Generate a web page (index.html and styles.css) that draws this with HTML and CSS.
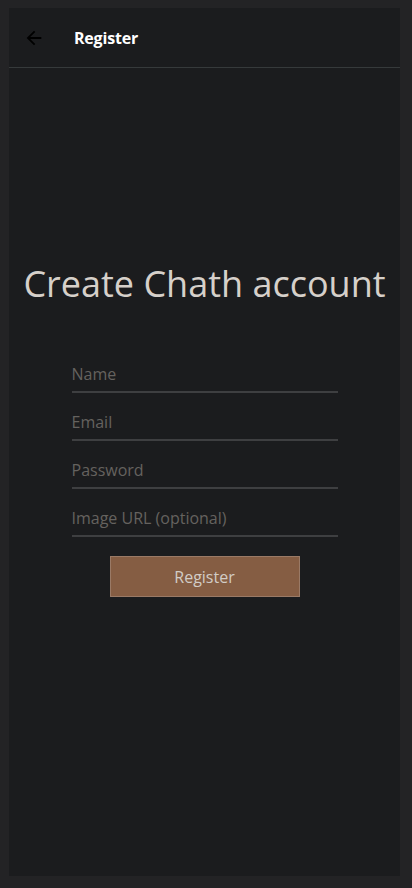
FILE: index.html
```html
<!DOCTYPE html>
<html lang="en">
<head>
<meta charset="utf-8">
<title>Register</title>
<link rel="stylesheet" href="styles.css">
</head>
<body>
<div class="panel">
  <header class="topbar">
    <button class="back" aria-label="Back">
      <svg width="22" height="22" viewBox="0 0 24 24"><path d="M20 11H7.83l5.59-5.59L12 4l-8 8 8 8 1.41-1.41L7.83 13H20v-2z" fill="#000"/></svg>
    </button>
    <h1 class="title">Register</h1>
  </header>
  <main class="content">
    <h2 class="heading">Create Chath account</h2>
    <form class="form">
      <input class="field" type="text" placeholder="Name">
      <input class="field" type="email" placeholder="Email">
      <input class="field" type="password" placeholder="Password">
      <input class="field" type="text" placeholder="Image URL (optional)">
      <button class="submit" type="button">Register</button>
    </form>
  </main>
</div>
</body>
</html>
```
FILE: styles.css
```css
html, body {
  margin: 0;
  padding: 0;
  background: #232325;
  height: 100%;
}
body {
  padding: 8px 12px 12px 9px;
  box-sizing: border-box;
  font-family: "Open Sans", "Noto Sans", sans-serif;
}
.panel {
  width: 391px;
  height: 868px;
  background: #1b1c1e;
  display: flex;
  flex-direction: column;
}
.topbar {
  height: 59px;
  border-bottom: 1px solid #363a3b;
  display: flex;
  align-items: center;
  padding-left: 14px;
  gap: 29px;
  flex-shrink: 0;
}
.back {
  background: none;
  border: none;
  padding: 0;
  width: 22px;
  height: 22px;
  display: flex;
  cursor: pointer;
}
.title {
  margin: 0;
  font-size: 16px;
  font-weight: 700;
  color: #ffffff;
  padding-top: 1px;
  letter-spacing: -0.2px;
}
.content {
  display: flex;
  flex-direction: column;
  align-items: center;
  padding-top: 192px;
}
.heading {
  margin: 0;
  font-weight: 400;
  font-size: 36px;
  color: #d6d0ca;
  line-height: 48px;
}
.form {
  margin-top: 37px;
  width: 266px;
  display: flex;
  flex-direction: column;
  align-items: center;
}
.field {
  width: 100%;
  box-sizing: border-box;
  height: 48px;
  background: transparent;
  border: none;
  border-bottom: 2px solid #3e3f41;
  padding: 12px 0 0 0;
  font-family: inherit;
  font-size: 16px;
  color: #d6d0ca;
  outline: none;
}
.field::placeholder {
  color: #65625f;
}
.submit {
  margin-top: 19px;
  width: 190px;
  height: 41px;
  background: #855d43;
  border: 1px solid #9a7a66;
  color: #d2ccc6;
  font-family: inherit;
  font-size: 16px;
}
```
